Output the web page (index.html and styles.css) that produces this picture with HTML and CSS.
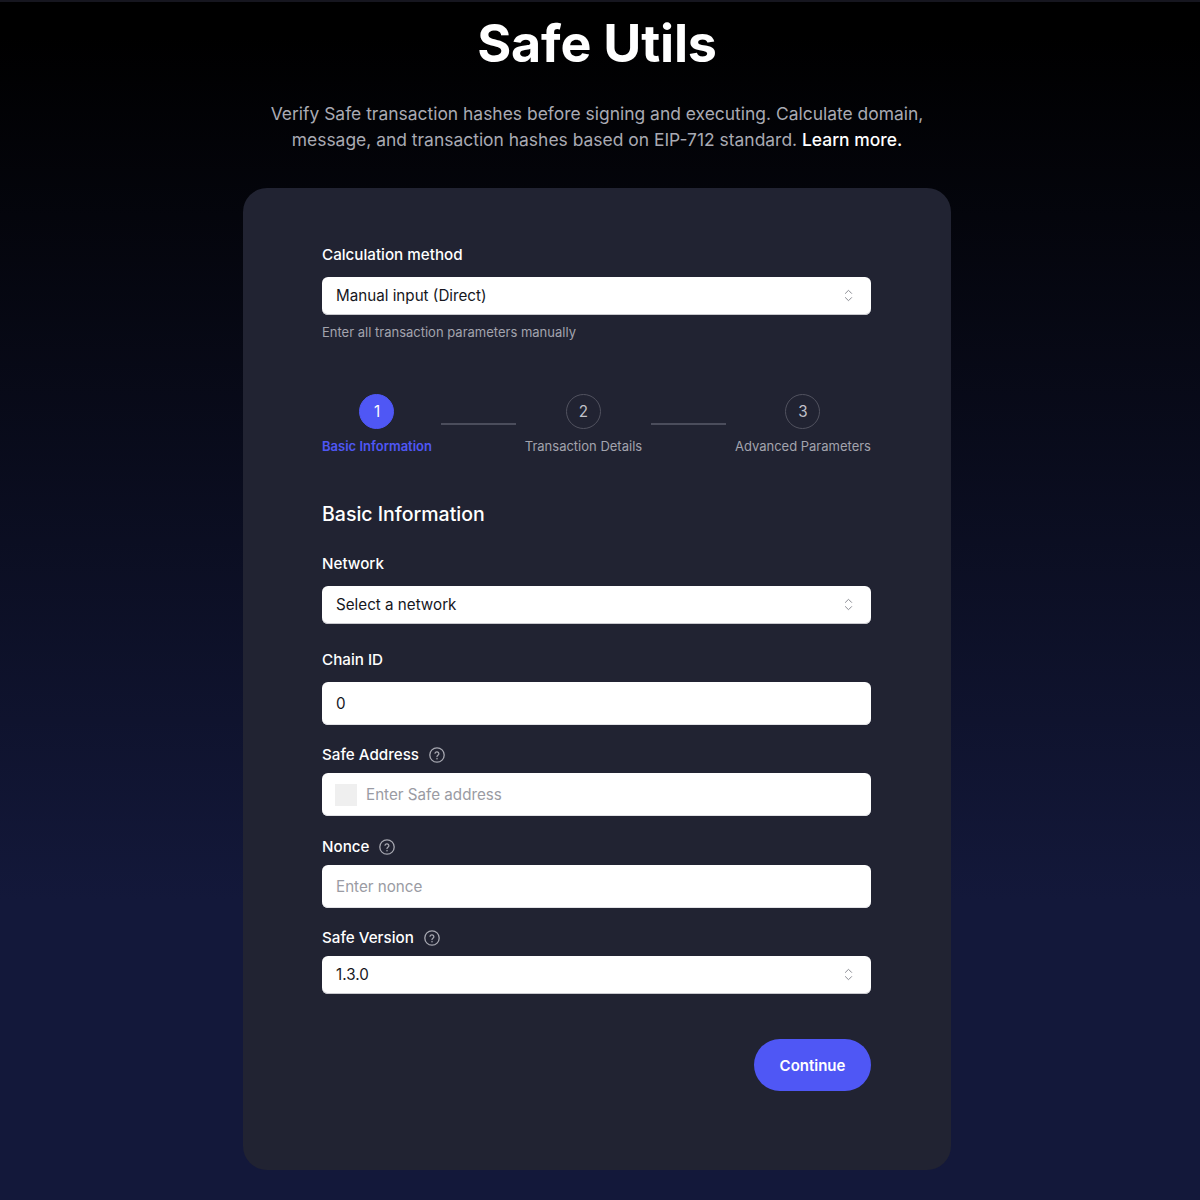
FILE: index.html
```html
<!DOCTYPE html>
<html lang="en">
<head>
<meta charset="utf-8">
<title>Safe Utils</title>
<link rel="stylesheet" href="styles.css">
</head>
<body>
<div class="topline"></div>
<main class="page">
  <h1 class="title">Safe Utils</h1>
  <p class="intro">Verify Safe transaction hashes before signing and executing. Calculate domain, message, and transaction hashes based on EIP-712 standard. <a class="learn" href="#">Learn more.</a></p>
  <section class="card">
    <div class="method">
      <label class="label">Calculation method</label>
      <div class="select"><span>Manual input (Direct)</span>
        <svg class="chev" viewBox="0 0 15 15" fill="none"><path d="M4.4 5.4 7.5 2.3l3.1 3.1M4.4 9.6l3.1 3.1 3.1-3.1" stroke="currentColor" stroke-linecap="round" stroke-linejoin="round"/></svg>
      </div>
      <p class="hint">Enter all transaction parameters manually</p>
    </div>
    <ol class="steps">
      <li class="step active"><span class="num">1</span><span class="step-name">Basic Information</span></li>
      <li class="link"></li>
      <li class="step"><span class="num">2</span><span class="step-name">Transaction Details</span></li>
      <li class="link"></li>
      <li class="step"><span class="num">3</span><span class="step-name">Advanced Parameters</span></li>
    </ol>
    <h2 class="section-title">Basic Information</h2>
    <div class="field network">
      <label class="label">Network</label>
      <div class="select"><span>Select a network</span>
        <svg class="chev" viewBox="0 0 15 15" fill="none"><path d="M4.4 5.4 7.5 2.3l3.1 3.1M4.4 9.6l3.1 3.1 3.1-3.1" stroke="currentColor" stroke-linecap="round" stroke-linejoin="round"/></svg>
      </div>
    </div>
    <div class="field chain">
      <label class="label">Chain ID</label>
      <div class="input">0</div>
    </div>
    <div class="field tight">
      <label class="label">Safe Address
        <svg class="help" viewBox="0 0 16 16" fill="none"><circle cx="8" cy="8" r="7.2" stroke="currentColor" stroke-width="1.3"/><path d="M6 6.2a2 2 0 0 1 3.9.6c0 1.3-1.9 1.6-1.9 2.7" stroke="currentColor" stroke-width="1.3" stroke-linecap="round"/><circle cx="8" cy="11.8" r=".8" fill="currentColor"/></svg>
      </label>
      <div class="input placeholder"><span class="blockie"></span>Enter Safe address</div>
    </div>
    <div class="field tight">
      <label class="label">Nonce
        <svg class="help" viewBox="0 0 16 16" fill="none"><circle cx="8" cy="8" r="7.2" stroke="currentColor" stroke-width="1.3"/><path d="M6 6.2a2 2 0 0 1 3.9.6c0 1.3-1.9 1.6-1.9 2.7" stroke="currentColor" stroke-width="1.3" stroke-linecap="round"/><circle cx="8" cy="11.8" r=".8" fill="currentColor"/></svg>
      </label>
      <div class="input placeholder">Enter nonce</div>
    </div>
    <div class="field tight">
      <label class="label">Safe Version
        <svg class="help" viewBox="0 0 16 16" fill="none"><circle cx="8" cy="8" r="7.2" stroke="currentColor" stroke-width="1.3"/><path d="M6 6.2a2 2 0 0 1 3.9.6c0 1.3-1.9 1.6-1.9 2.7" stroke="currentColor" stroke-width="1.3" stroke-linecap="round"/><circle cx="8" cy="11.8" r=".8" fill="currentColor"/></svg>
      </label>
      <div class="select"><span>1.3.0</span>
        <svg class="chev" viewBox="0 0 15 15" fill="none"><path d="M4.4 5.4 7.5 2.3l3.1 3.1M4.4 9.6l3.1 3.1 3.1-3.1" stroke="currentColor" stroke-linecap="round" stroke-linejoin="round"/></svg>
      </div>
    </div>
    <div class="actions"><button class="continue" type="button">Continue</button></div>
  </section>
</main>
</body>
</html>
```
FILE: styles.css
```css
* { box-sizing: border-box; }
html, body { margin: 0; height: 100%; }
body {
  height: 1200px;
  overflow: hidden;
  padding-right: 6px;
  font-family: Inter, "Liberation Sans", sans-serif;
  background: linear-gradient(180deg, #000 3%, #13183a 75%, #13183a 100%);
  color: #fff;
}
.topline { height: 2px; margin-right: -6px; background: #16161f; }
.page { width: 708px; margin: 0 auto; display: flex; flex-direction: column; align-items: center; }
.title { margin: 10px 0 0; font-size: 52px; line-height: 64px; font-weight: 700; letter-spacing: -0.2px; text-align: center; white-space: nowrap; }
.intro { margin: 24.5px 0 0; font-size: 17.44px; line-height: 26px; color: #a9aab3; text-align: center; }
.learn { color: #fff; text-decoration: none; font-weight: 500; }
.card {
  width: 708px; height: 982px; margin-top: 35.5px;
  background: #212332;
  border-radius: 24px;
  padding: 57px 80px 0 79px;
  display: flex; flex-direction: column;
}
.label { display: flex; align-items: center; gap: 10px; font-size: 15.2px; line-height: 20px; font-weight: 500; color: #fff; }
.select, .input {
  width: 100%; background: #fff; color: #16171d;
  display: flex; align-items: center;
  font-size: 15.2px; border-radius: 6px;
  padding: 0 14px;
}
.select { height: 38px; justify-content: space-between; margin-top: 12px; padding-bottom: 2px; box-shadow: inset 0 -1px 0 #c9c9ce; }
.network .select { margin-top: 12.5px; }
.input { height: 43px; margin-top: 12px; box-shadow: inset 0 -1px 0 #e2e2e6; }
.chev { width: 15px; height: 15px; color: #8b8c93; margin-right: 1px; }
.hint { margin: 8px 0 0; font-size: 13px; line-height: 18px; color: #a3a4ae; }
.steps { list-style: none; margin: 52.5px 0 0; padding: 0; display: flex; justify-content: space-between; align-items: flex-start; }
.step { display: flex; flex-direction: column; align-items: center; }
.num { width: 35px; height: 35px; border-radius: 50%; border: 1.5px solid #51525f; display: flex; align-items: center; justify-content: center; font-size: 15.2px; color: #c0c1ca; }
.active .num { background: #4f57f5; border-color: #4f57f5; color: #fff; }
.step-name { margin-top: 8.5px; font-size: 13px; line-height: 18px; color: #a3a4ae; white-space: nowrap; }
.active .step-name { color: #4f57f5; font-weight: 600; }
.link { width: 75px; height: 2px; margin-top: 29.5px; background: #4b4d5c; }
.section-title { margin: 45px 0 0; font-size: 19.5px; line-height: 28px; font-weight: 500; }
.network { margin-top: 25.5px; }
.chain { margin-top: 25.9px; }
.tight { margin-top: 20.5px; }
.tight .input, .tight .select { margin-top: 8px; }
.help { width: 16px; height: 16px; color: #a6a7b0; }
.placeholder { color: #9a9ba3; }
.blockie { width: 22px; height: 22px; background: #efefef; margin: 0 9px 0 -1px; }
.actions { display: flex; justify-content: flex-end; margin-top: 45px; }
.continue { width: 117px; height: 52px; border: 0; border-radius: 26px; background: #4f57f5; color: #fff; font: 600 15px Inter, "Liberation Sans", sans-serif; }
```
